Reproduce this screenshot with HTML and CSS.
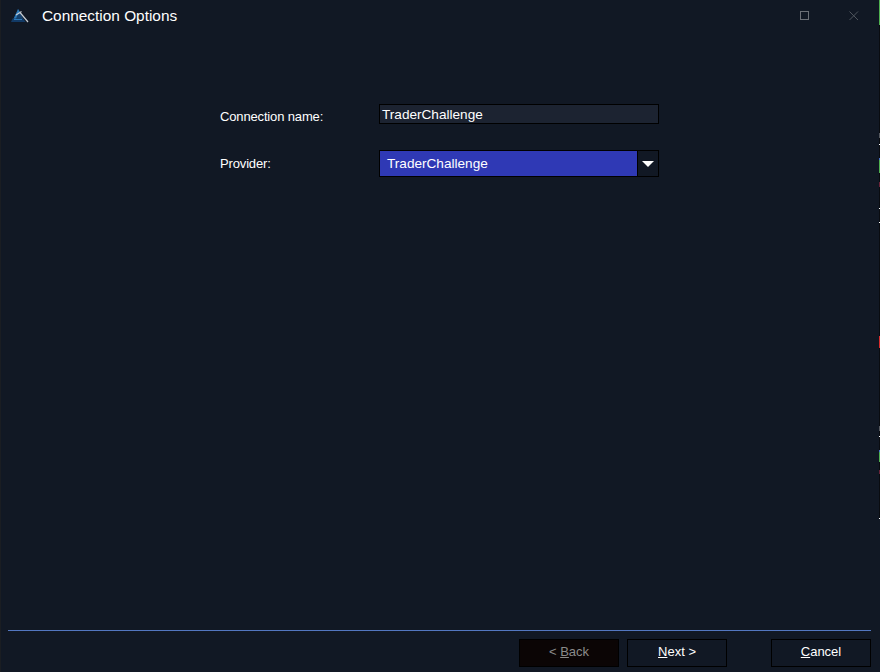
FILE: index.html
```html
<!DOCTYPE html>
<html lang="en">
<head>
<meta charset="utf-8">
<title>Connection Options</title>
<link rel="stylesheet" href="styles.css">
</head>
<body>
<div class="window">
  <div class="main">
    <header class="titlebar">
      <svg class="logo" width="20" height="18" viewBox="0 0 20 18" aria-hidden="true">
        <path d="M8 2 L14 13 L6 13 Z" fill="#16426f"/>
        <path d="M8 2 L10 5 L7 9 L6 13 L3 13 Z" fill="#2a78b8"/>
        <path d="M2.500 11.500 H13 L15.500 15 H1 Z" fill="#123a66"/>
        <path d="M4 12.500 H12" stroke="#2a78b8" stroke-width="1"/>
        <path d="M6 8 L11.500 4.500 M10 5.500 L18 15" stroke="#c4cbd3" stroke-width="1.200" fill="none"/>
      </svg>
      <span class="title">Connection Options</span>
      <div class="controls">
        <svg width="10" height="10" viewBox="0 0 10 10" aria-hidden="true"><rect x=".5" y=".5" width="8" height="8" fill="none" stroke="#6b6f76"/></svg>
        <svg width="10" height="10" viewBox="0 0 10 10" aria-hidden="true"><path d="M.5 .5 L9 9 M9 .5 L.5 9" fill="none" stroke="#4f545c"/></svg>
      </div>
    </header>
    <main class="content">
      <form class="form">
        <div class="row row-name">
          <span class="label">Connection name:</span>
          <div class="textbox">TraderChallenge</div>
        </div>
        <div class="row row-provider">
          <span class="label">Provider:</span>
          <div class="select">
            <div class="select-value">TraderChallenge</div>
            <div class="select-arrow"><svg width="12" height="6" viewBox="0 0 12 6" aria-hidden="true"><path d="M0 0 H12 L6 6 Z" fill="#fff"/></svg></div>
          </div>
        </div>
      </form>
    </main>
    <footer class="footer">
      <div class="rule"></div>
      <div class="buttons">
        <div class="btn btn-disabled">&lt; <u>B</u>ack</div>
        <div class="btn btn-next"><u>N</u>ext &gt;</div>
        <div class="btn btn-cancel"><u>C</u>ancel</div>
      </div>
    </footer>
  </div>
  <div class="edge"></div>
</div>
</body>
</html>
```
FILE: styles.css
```css
* { box-sizing: border-box; }
html, body { margin: 0; padding: 0; height: 100%; }
body { background: #111824; color: #fff; font-family: "Liberation Sans", Arial, sans-serif; font-size: 13px; }
.window { width: 880px; height: 672px; display: flex; background: #111824; border-left: 1px solid #1a1d22; }
.main { flex: 1; display: flex; flex-direction: column; min-width: 0; }
.edge {
  width: 1px;
  flex: none;
  background: linear-gradient(to bottom,
    #4fb04f 0 25px, #0a0c10 25px 133px, #55585e 133px 138px, #0a0c10 138px 144px, #fff 144px 145px,
    #0a0c10 145px 158px, #4a72c8 158px 160px, #4fb04f 160px 173px, #0a0c10 173px 182px, #6a2338 182px 187px,
    #0a0c10 187px 208px, #fff 208px 209px, #0a0c10 209px 222px, #fff 222px 223px, #0a0c10 223px 336px,
    #d92b2b 336px 348px, #0a0c10 348px 426px, #55585e 426px 431px, #0a0c10 431px 436px, #fff 436px 437px,
    #0a0c10 437px 450px, #4a72c8 450px 452px, #4fb04f 452px 462px, #0a0c10 462px 470px, #6a2338 470px 474px,
    #0a0c10 474px 518px, #fff 518px 519px, #111824 519px 672px);
}
.titlebar { height: 32px; display: flex; align-items: center; flex: none; }
.logo { margin-left: 9px; flex: none; }
.title { margin-left: 12px; font-size: 15.400px; line-height: 30px; color: #fff; }
.controls { margin-left: auto; display: flex; align-items: center; gap: 39px; padding-right: 20px; margin-bottom: 1px; }
.content { flex: 1; padding: 72px 0 0 219px; }
.form { display: flex; flex-direction: column; width: 440px; }
.row { display: flex; }
.label { width: 159px; flex: none; letter-spacing: -.15px; }
.row-name { height: 20px; align-items: center; }
.row-name .label { padding-top: 4px; }
.row-provider { margin-top: 26px; height: 27px; align-items: center; }
.textbox { width: 280px; height: 20px; background: #1c2331; border: 1px solid #000; line-height: 20px; padding-left: 2px; font-size: 13.600px; }
.select { width: 280px; height: 27px; display: flex; border: 1px solid #000; font-size: 13.600px; }
.select-value { flex: 1; background: #2f39b5; padding-left: 7px; line-height: 26px; border-right: 1px solid #000; }
.select-arrow { width: 20px; display: flex; align-items: center; justify-content: center; background: #111824; }
.footer { flex: none; padding: 0 8px 5px 7px; }
.rule { height: 1px; background: #5377c0; }
.buttons { display: flex; margin-top: 8px; padding-left: 511px; }
.btn { height: 28px; width: 100px; display: flex; align-items: center; justify-content: center; white-space: pre; border: 1px solid #000; padding-bottom: 3px; }
.btn-disabled { background: #0b0505; color: #8a8a8a; }
.btn-next { margin-left: 8px; }
.btn-cancel { margin-left: 44px; }
```
